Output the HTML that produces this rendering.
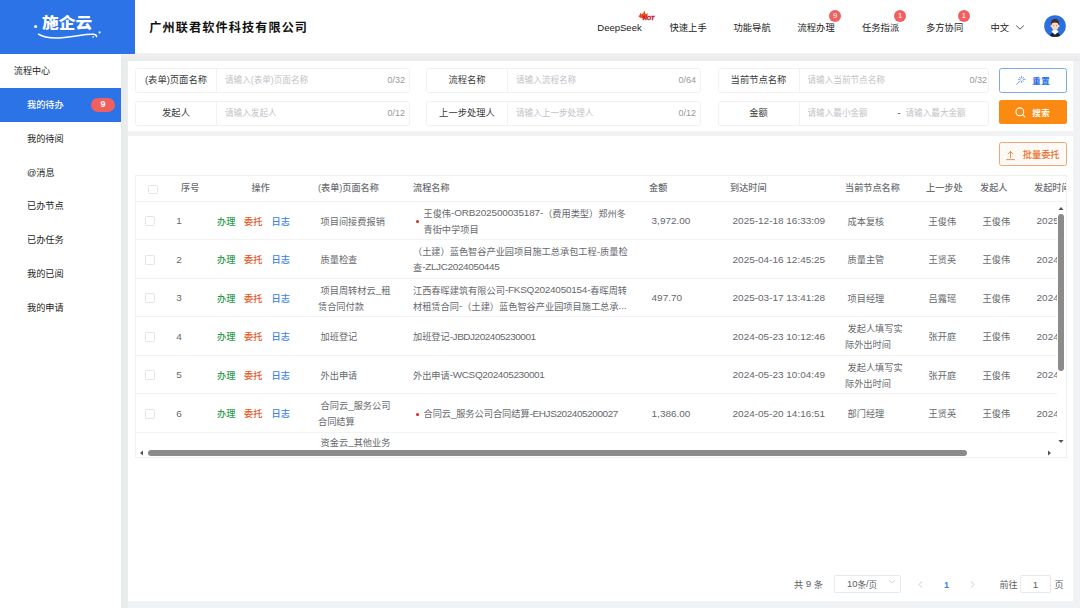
<!DOCTYPE html>
<html lang="zh-CN">
<head>
<meta charset="utf-8">
<title>施企云 - 流程中心</title>
<style>
*{box-sizing:border-box;margin:0;padding:0}
html,body{width:1080px;height:608px;overflow:hidden}
body{background:#f0f2f4;font-family:"Liberation Sans","Noto Sans CJK SC",sans-serif;color:#555;position:relative;font-size:8.6px}
.abs{position:absolute}
/* header */
#logo{left:0;top:0;width:134.8px;height:53.5px;background:#2b73e6}
#logo .t{left:42.3px;top:10.3px;font-size:16.6px;line-height:24px;font-weight:900;color:#fff;letter-spacing:0;white-space:nowrap;transform:scale(1.01,.9);transform-origin:0 100%}
#top{left:134px;top:0;width:946px;height:53.4px;background:#fff}
#topshadow{left:121px;top:53.4px;width:959px;height:7.8px;background:linear-gradient(#f1f1f2,#e9eaeb)}
#leftgap{left:121px;top:61px;width:7px;height:547px;background:linear-gradient(90deg,#e7e9ea,#ecedee)}
#company{left:149.2px;top:17.9px;font-size:12.1px;letter-spacing:1.15px;line-height:20px;font-weight:700;color:#111;white-space:nowrap}
.nav{top:20.2px;font-size:9.3px;line-height:16px;color:#222;white-space:nowrap}
.bdg{width:12.4px;height:12.4px;border-radius:50%;background:#f0605f;color:#fff;font-size:7.6px;line-height:12.4px;text-align:center}
/* sidebar */
#side{left:0;top:54px;width:121px;height:554px;background:#fff}
.mi{left:0;width:121px;height:33.7px;line-height:33.7px;padding-left:27px;font-size:9.2px;color:#222;white-space:nowrap}
.mi.act{background:#2b73e6;color:#fff;font-weight:500}
/* panels */
.panel{background:#fff}
.fl{height:25px;border:1px solid #f2f2f3;border-radius:2.5px;background:#fff}
.fl .lab{left:0;top:0;height:23px;line-height:23px;width:81px;text-align:center;font-size:9.3px;color:#3a3a3a;border-right:1px solid #f2f2f3;white-space:nowrap}
.fl .ph{top:0;height:23px;line-height:22.6px;font-size:8.6px;color:#bfc2c8;white-space:nowrap}
.fl .cnt{top:0;right:4px;height:23px;line-height:23px;font-size:9px;color:#999}
/* table */
#tbl{left:135px;top:174.5px;width:932px;height:283.5px;border:1px solid #f1f1f1;overflow:hidden;background:#fff}
.hr{left:0;top:0;width:930px;height:26px;border-bottom:1px solid #f1f1f1}
.l{font-size:108.5%;line-height:0;position:relative;top:-.6px}
.th{top:0;height:26px;line-height:25.6px;font-size:9.15px;color:#6b6d72;font-weight:500;white-space:nowrap}
.row{left:0;width:921px;border-bottom:1px solid #f3f3f3;height:38.5px}
.td{font-size:9.2px;color:#66686d;line-height:15.6px;white-space:nowrap}
.ck{width:9.6px;height:9.6px;border:1px solid #e3e4e8;border-radius:1.5px;background:#fff}
.op{font-size:9.2px;line-height:15.6px;font-weight:500;white-space:nowrap}
.dot{width:3px;height:3px;border-radius:50%;background:#d9281e}
</style>
</head>
<body>
<!-- header -->
<div id="top" class="abs"></div>
<div id="topshadow" class="abs"></div>
<div id="leftgap" class="abs"></div>
<div id="logo" class="abs">
  <div class="t abs">施企云</div>
  <svg class="abs" style="left:30px;top:20px" width="75" height="22" viewBox="0 0 75 22">
    <circle cx="5.6" cy="6.6" r="1.5" fill="#fff"/>
    <path d="M8.5 14.2 C18 20.5 38 17.6 56 14.6 C62 13.6 66.5 14.2 66.6 16.6" fill="none" stroke="#fff" stroke-width="1.5" stroke-linecap="round"/>
    <circle cx="69.6" cy="12.4" r="1.1" fill="#fff" opacity=".9"/>
    <circle cx="63.2" cy="17" r=".9" fill="#fff" opacity=".8"/>
  </svg>
</div>
<div id="company" class="abs">广州联君软件科技有限公司</div>

<div class="nav abs" style="left:597.3px;font-size:9.5px">DeepSeek</div>
<svg class="abs" style="left:636px;top:9px" width="22" height="13" viewBox="0 0 22 13">
  <path d="M2.2 7.1 C3.4 6.8 4 5.8 4.1 4.2 L4.5 4 L5.6 5.4 C6.8 4.6 7.8 3.4 8.3 1.7 C9 2.8 9.4 4 9.5 5.2 L11.2 4.5 L11.6 4.6 C11.9 5.6 11.8 6.6 11.2 7.6 L8.4 9.4 L6.3 9.3 C4.6 9 3.2 8.2 2.2 7.1 Z" fill="#f0481c"/>
  <text x="6.7" y="11.4" font-family="Liberation Sans, sans-serif" font-size="4.5" font-weight="700" font-style="italic" fill="#c5122c" stroke="#c5122c" stroke-width=".3" textLength="11.7" lengthAdjust="spacingAndGlyphs">HOT</text>
</svg>
<div class="nav abs" style="left:669.5px">快速上手</div>
<div class="nav abs" style="left:733.5px">功能导航</div>
<div class="nav abs" style="left:797.5px">流程办理</div>
<div class="nav abs" style="left:862px">任务指派</div>
<div class="nav abs" style="left:926px">多方协同</div>
<div class="nav abs" style="left:990.5px">中文</div>
<svg class="abs" style="left:1014.5px;top:24px" width="10" height="7" viewBox="0 0 10 7"><path d="M1.2 1.6 L5 5.2 L8.8 1.6" fill="none" stroke="#555" stroke-width="1"/></svg>
<div class="bdg abs" style="left:828.8px;top:10px">9</div>
<div class="bdg abs" style="left:893.8px;top:10px">1</div>
<div class="bdg abs" style="left:957.6px;top:10px">1</div>
<svg class="abs" style="left:1043.9px;top:14.5px" width="22" height="22" viewBox="0 0 23 23">
  <defs><clipPath id="av"><circle cx="11.5" cy="11.5" r="11.3"/></clipPath></defs>
  <circle cx="11.5" cy="11.5" r="11.3" fill="#2a6fe0"/>
  <g clip-path="url(#av)">
    <path d="M6.2 23 C6.2 19.6 8.4 18 11.5 18 C14.6 18 16.8 19.6 16.8 23 Z" fill="#1b1f2a"/>
    <path d="M7.8 17.4 L11.5 20.6 L15.2 17.4 L13.4 15.4 L9.6 15.4 Z" fill="#fff"/>
    <ellipse cx="11.5" cy="11.2" rx="3.8" ry="4.9" fill="#f7d8c4"/>
    <ellipse cx="7.6" cy="11.6" rx=".8" ry="1.2" fill="#f7d8c4"/><ellipse cx="15.4" cy="11.6" rx=".8" ry="1.2" fill="#f7d8c4"/>
    <path d="M7.4 10.6 C6.8 5.8 9 4.2 11.5 4.2 C14 4.2 16.2 5.8 15.6 10.6 C15 8.6 14 7.8 11.5 7.8 C9 7.8 8 8.6 7.4 10.6 Z" fill="#4a2a1e"/>
    <circle cx="10" cy="11" r=".45" fill="#444"/><circle cx="13" cy="11" r=".45" fill="#444"/>
  </g>
</svg>

<!-- sidebar -->
<div id="side" class="abs">
  <div class="abs" style="left:13.8px;top:9px;font-size:9.1px;line-height:16px;color:#222;white-space:nowrap">流程中心</div>
  <div class="mi act abs" style="top:34.3px;height:33.6px;line-height:35.1px">我的待办</div>
  <div class="abs" style="left:91px;top:44.4px;width:24px;height:13.4px;border-radius:7px;background:#f0605f;color:#fff;font-size:9px;font-weight:700;line-height:13.6px;text-align:center">9</div>
  <div class="mi abs" style="top:68.75px">我的待阅</div>
  <div class="mi abs" style="top:102.50px">@消息</div>
  <div class="mi abs" style="top:136.25px">已办节点</div>
  <div class="mi abs" style="top:170.00px">已办任务</div>
  <div class="mi abs" style="top:203.75px">我的已阅</div>
  <div class="mi abs" style="top:237.50px">我的申请</div>
</div>

<!-- filter panel -->
<div class="panel abs" style="left:128px;top:61px;width:945px;height:70px"></div>
<div class="fl abs" style="left:135px;top:68px;width:275px"><div class="lab abs">(表单)页面名称</div><div class="ph abs" style="left:89px">请输入(表单)页面名称</div><div class="cnt abs">0/32</div></div>
<div class="fl abs" style="left:426px;top:68px;width:275px"><div class="lab abs">流程名称</div><div class="ph abs" style="left:89px">请输入流程名称</div><div class="cnt abs">0/64</div></div>
<div class="fl abs" style="left:717.5px;top:68px;width:271px"><div class="lab abs">当前节点名称</div><div class="ph abs" style="left:89px">请输入当前节点名称</div><div class="cnt abs" style="right:.5px">0/32</div></div>
<div class="fl abs" style="left:135px;top:100.5px;width:275px"><div class="lab abs">发起人</div><div class="ph abs" style="left:89px">请输入发起人</div><div class="cnt abs">0/12</div></div>
<div class="fl abs" style="left:426px;top:100.5px;width:275px"><div class="lab abs">上一步处理人</div><div class="ph abs" style="left:89px">请输入上一步处理人</div><div class="cnt abs">0/12</div></div>
<div class="fl abs" style="left:717.5px;top:100.5px;width:271px"><div class="lab abs">金额</div><div class="ph abs" style="left:89px">请输入最小金额</div><div class="abs" style="left:179px;top:0;line-height:22px;font-size:9px;color:#333">-</div><div class="ph abs" style="left:187px">请输入最大金额</div></div>

<!-- buttons -->
<div class="abs" style="left:999px;top:68px;width:68px;height:25px;border:1px solid #7aa9ec;border-radius:2.5px;background:#fff"></div>
<svg class="abs" style="left:1014.6px;top:74.2px" width="12" height="12" viewBox="0 0 12 12" fill="none" stroke="#4f86e6" stroke-width=".8" stroke-linecap="round">
  <path d="M1.6 10.4 L5.2 6.8"/><path d="M6.6 2.2v1.6M6.6 7.4v1.2M3.6 5.4h1.4M8.4 5.4h1.6M4.6 3.4l.9.9M8.6 3.4l-.9.9M8.6 7.4l-.9-.9"/>
</svg>
<div class="abs" style="left:1032.3px;top:72.9px;font-size:8.5px;letter-spacing:.35px;line-height:16px;font-weight:700;color:#2b73e6;white-space:nowrap">重置</div>
<div class="abs" style="left:999px;top:100px;width:67.5px;height:24px;border-radius:2.5px;background:#fb8a12"></div>
<svg class="abs" style="left:1014px;top:105.5px" width="13" height="13" viewBox="0 0 13 13" fill="none" stroke="#fff" stroke-width="1.1" stroke-linecap="round"><circle cx="5.8" cy="5.8" r="3.9"/><path d="M8.8 8.8 L10.8 10.8"/></svg>
<div class="abs" style="left:1032.3px;top:105px;font-size:8.5px;letter-spacing:.35px;line-height:16px;font-weight:700;color:#fff;white-space:nowrap">搜索</div>

<!-- table panel -->
<div class="panel abs" style="left:128px;top:135.5px;width:945px;height:465px"></div>
<div class="abs" style="left:999px;top:142.2px;width:67.5px;height:24px;border:1px solid #f0a878;border-radius:2.5px;background:#fffaf6"></div>
<svg class="abs" style="left:1005.3px;top:149.6px" width="11" height="11" viewBox="0 0 11 11" fill="none" stroke="#e8702a" stroke-width=".8" stroke-linecap="round" stroke-linejoin="round"><path d="M5.5 7.6V1.6M3.2 3.8L5.5 1.5L7.8 3.8M1.6 9.6h7.8"/></svg>
<div class="abs" style="left:1022.8px;top:147.2px;font-size:9.2px;line-height:16px;font-weight:500;color:#e8702a;white-space:nowrap">批量委托</div>

<div id="tbl" class="abs">
  <div class="hr abs">
    <div class="ck abs" style="left:12px;top:9px"></div>
    <div class="th abs" style="left:45px">序号</div>
    <div class="th abs" style="left:115.5px">操作</div>
    <div class="th abs" style="left:182px">(表单)页面名称</div>
    <div class="th abs" style="left:277px">流程名称</div>
    <div class="th abs" style="left:513px">金额</div>
    <div class="th abs" style="left:594px">到达时间</div>
    <div class="th abs" style="left:709px">当前节点名称</div>
    <div class="th abs" style="left:790px">上一步处</div>
    <div class="th abs" style="left:844px">发起人</div>
    <div class="th abs" style="left:898px">发起时间</div>
  </div>
  <div id="rows">
    <div class="row abs" style="top:26.40px"></div>
    <div class="ck abs" style="left:9px;top:40.95px"></div>
    <div class="td abs" style="left:40.3px;top:39.25px"><span class="l">1</span></div>
    <div class="op abs" style="left:81px;top:39.25px;color:#2f9b4e">办理</div>
    <div class="op abs" style="left:108px;top:39.25px;color:#e8561f">委托</div>
    <div class="op abs" style="left:135.5px;top:39.25px;color:#3a84e0">日志</div>
    <div class="td abs" style="left:182px;top:39.25px">&nbsp;项目间接费报销</div>
    <div class="dot abs" style="left:280px;top:44.55px"></div>
    <div class="td abs" style="left:287.5px;top:31.45px">王俊伟<span class="l" style="letter-spacing:-0.16px">-ORB202500035187-</span>（费用类型）郑州冬<br>青街中学项目</div>
    <div class="td abs" style="left:513px;top:39.25px">&nbsp;<span class="l">3,972.00</span></div>
    <div class="td abs" style="left:594px;top:39.25px">&nbsp;<span class="l">2025-12-18 16:33:09</span></div>
    <div class="td abs" style="left:709px;top:39.25px">&nbsp;成本复核</div>
    <div class="td abs" style="left:790px;top:39.25px">&nbsp;王俊伟</div>
    <div class="td abs" style="left:844px;top:39.25px">&nbsp;王俊伟</div>
    <div class="td abs" style="left:898px;top:39.25px">&nbsp;<span class="l">2025</span></div>
    <div class="row abs" style="top:64.90px"></div>
    <div class="ck abs" style="left:9px;top:79.45px"></div>
    <div class="td abs" style="left:40.3px;top:77.75px"><span class="l">2</span></div>
    <div class="op abs" style="left:81px;top:77.75px;color:#2f9b4e">办理</div>
    <div class="op abs" style="left:108px;top:77.75px;color:#e8561f">委托</div>
    <div class="op abs" style="left:135.5px;top:77.75px;color:#3a84e0">日志</div>
    <div class="td abs" style="left:182px;top:77.75px">&nbsp;质量检查</div>
    <div class="td abs" style="left:277px;top:69.95px">（土建）蓝色智谷产业园项目施工总承包工程<span class="l">-</span>质量检<br>查<span class="l" style="letter-spacing:-0.36px">-ZLJC2024050445</span></div>
    <div class="td abs" style="left:594px;top:77.75px">&nbsp;<span class="l">2025-04-16 12:45:25</span></div>
    <div class="td abs" style="left:709px;top:77.75px">&nbsp;质量主管</div>
    <div class="td abs" style="left:790px;top:77.75px">&nbsp;王贤英</div>
    <div class="td abs" style="left:844px;top:77.75px">&nbsp;王俊伟</div>
    <div class="td abs" style="left:898px;top:77.75px">&nbsp;<span class="l">2024</span></div>
    <div class="row abs" style="top:103.40px"></div>
    <div class="ck abs" style="left:9px;top:117.95px"></div>
    <div class="td abs" style="left:40.3px;top:116.25px"><span class="l">3</span></div>
    <div class="op abs" style="left:81px;top:116.25px;color:#2f9b4e">办理</div>
    <div class="op abs" style="left:108px;top:116.25px;color:#e8561f">委托</div>
    <div class="op abs" style="left:135.5px;top:116.25px;color:#3a84e0">日志</div>
    <div class="td abs" style="left:182px;top:108.45px">&nbsp;项目周转材云<span class="l">_</span>租<br>赁合同付款</div>
    <div class="td abs" style="left:277px;top:108.45px">江西春晖建筑有限公司<span class="l" style="letter-spacing:-0.24px">-FKSQ2024050154-</span>春晖周转<br>材租赁合同<span class="l">-</span>（土建）蓝色智谷产业园项目施工总承<span class="l">...</span></div>
    <div class="td abs" style="left:513px;top:116.25px">&nbsp;<span class="l">497.70</span></div>
    <div class="td abs" style="left:594px;top:116.25px">&nbsp;<span class="l">2025-03-17 13:41:28</span></div>
    <div class="td abs" style="left:709px;top:116.25px">&nbsp;项目经理</div>
    <div class="td abs" style="left:790px;top:116.25px">&nbsp;吕露瑶</div>
    <div class="td abs" style="left:844px;top:116.25px">&nbsp;王俊伟</div>
    <div class="td abs" style="left:898px;top:116.25px">&nbsp;<span class="l">2024</span></div>
    <div class="row abs" style="top:141.90px"></div>
    <div class="ck abs" style="left:9px;top:156.45px"></div>
    <div class="td abs" style="left:40.3px;top:154.75px"><span class="l">4</span></div>
    <div class="op abs" style="left:81px;top:154.75px;color:#2f9b4e">办理</div>
    <div class="op abs" style="left:108px;top:154.75px;color:#e8561f">委托</div>
    <div class="op abs" style="left:135.5px;top:154.75px;color:#3a84e0">日志</div>
    <div class="td abs" style="left:182px;top:154.75px">&nbsp;加班登记</div>
    <div class="td abs" style="left:277px;top:154.75px">加班登记<span class="l" style="letter-spacing:-0.46px">-JBDJ202405230001</span></div>
    <div class="td abs" style="left:594px;top:154.75px">&nbsp;<span class="l">2024-05-23 10:12:46</span></div>
    <div class="td abs" style="left:709px;top:146.95px">&nbsp;发起人填写实<br>际外出时间</div>
    <div class="td abs" style="left:790px;top:154.75px">&nbsp;张开庭</div>
    <div class="td abs" style="left:844px;top:154.75px">&nbsp;王俊伟</div>
    <div class="td abs" style="left:898px;top:154.75px">&nbsp;<span class="l">2024</span></div>
    <div class="row abs" style="top:180.40px"></div>
    <div class="ck abs" style="left:9px;top:194.95px"></div>
    <div class="td abs" style="left:40.3px;top:193.25px"><span class="l">5</span></div>
    <div class="op abs" style="left:81px;top:193.25px;color:#2f9b4e">办理</div>
    <div class="op abs" style="left:108px;top:193.25px;color:#e8561f">委托</div>
    <div class="op abs" style="left:135.5px;top:193.25px;color:#3a84e0">日志</div>
    <div class="td abs" style="left:182px;top:193.25px">&nbsp;外出申请</div>
    <div class="td abs" style="left:277px;top:193.25px">外出申请<span class="l" style="letter-spacing:-0.36px">-WCSQ202405230001</span></div>
    <div class="td abs" style="left:594px;top:193.25px">&nbsp;<span class="l">2024-05-23 10:04:49</span></div>
    <div class="td abs" style="left:709px;top:185.45px">&nbsp;发起人填写实<br>际外出时间</div>
    <div class="td abs" style="left:790px;top:193.25px">&nbsp;张开庭</div>
    <div class="td abs" style="left:844px;top:193.25px">&nbsp;王俊伟</div>
    <div class="td abs" style="left:898px;top:193.25px">&nbsp;<span class="l">2024</span></div>
    <div class="row abs" style="top:218.90px"></div>
    <div class="ck abs" style="left:9px;top:233.45px"></div>
    <div class="td abs" style="left:40.3px;top:231.75px"><span class="l">6</span></div>
    <div class="op abs" style="left:81px;top:231.75px;color:#2f9b4e">办理</div>
    <div class="op abs" style="left:108px;top:231.75px;color:#e8561f">委托</div>
    <div class="op abs" style="left:135.5px;top:231.75px;color:#3a84e0">日志</div>
    <div class="td abs" style="left:182px;top:223.95px">&nbsp;合同云<span class="l">_</span>服务公司<br>合同结算</div>
    <div class="dot abs" style="left:280px;top:237.05px"></div>
    <div class="td abs" style="left:287.5px;top:231.75px">合同云<span class="l" style="letter-spacing:-0.42px">_</span>服务公司合同结算<span class="l" style="letter-spacing:-0.42px">-EHJS202405200027</span></div>
    <div class="td abs" style="left:513px;top:231.75px">&nbsp;<span class="l">1,386.00</span></div>
    <div class="td abs" style="left:594px;top:231.75px">&nbsp;<span class="l">2024-05-20 14:16:51</span></div>
    <div class="td abs" style="left:709px;top:231.75px">&nbsp;部门经理</div>
    <div class="td abs" style="left:790px;top:231.75px">&nbsp;王贤英</div>
    <div class="td abs" style="left:844px;top:231.75px">&nbsp;王俊伟</div>
    <div class="td abs" style="left:898px;top:231.75px">&nbsp;<span class="l">2024</span></div>
    <div class="td abs" style="left:182px;top:260.40px">&nbsp;资金云<span class="l">_</span>其他业务</div>
    <!-- scrollbars -->
    <div class="abs" style="left:921px;top:27px;width:9px;height:247px;background:#fff"></div>
    <div class="abs" style="left:922.3px;top:38.5px;width:5.6px;height:156.5px;border-radius:3px;background:#8b8b8b"></div>
    <svg class="abs" style="left:922px;top:30.5px" width="6" height="5" viewBox="0 0 6 5"><path d="M.4 4L3 1L5.6 4Z" fill="#555"/></svg>
    <svg class="abs" style="left:922px;top:263.5px" width="6" height="5" viewBox="0 0 6 5"><path d="M.4 1L3 4L5.6 1Z" fill="#555"/></svg>
    <div class="abs" style="left:0;top:272.5px;width:930px;height:10px;background:#fff"></div>
    <div class="abs" style="left:12px;top:274.7px;width:819px;height:5.6px;border-radius:3px;background:#8b8b8b"></div>
    <svg class="abs" style="left:3px;top:274.5px" width="5" height="6" viewBox="0 0 5 6"><path d="M4 .4L1 3L4 5.6Z" fill="#555"/></svg>
    <svg class="abs" style="left:911px;top:274.5px" width="5" height="6" viewBox="0 0 5 6"><path d="M1 .4L4 3L1 5.6Z" fill="#555"/></svg>
  </div>
</div>

<!-- pagination -->
<div class="abs" style="left:794px;top:576.5px;font-size:9.1px;line-height:16px;color:#5c5e63;white-space:nowrap">共 <span class="l">9</span> 条</div>
<div class="abs" style="left:833.5px;top:575px;width:67px;height:18px;border:1px solid #e8e9ec;border-radius:2px;background:#fff"></div>
<div class="abs" style="left:847px;top:576.5px;font-size:8.6px;line-height:16px;color:#5c5e63;white-space:nowrap"><span class="l">10</span>条<span class="l">/</span>页</div>
<svg class="abs" style="left:888px;top:579px" width="8" height="6" viewBox="0 0 8 6"><path d="M1.2 1.4L4 4.2L6.8 1.4" fill="none" stroke="#c4c7cd" stroke-width=".8"/></svg>
<svg class="abs" style="left:917px;top:579.5px" width="7" height="9" viewBox="0 0 7 9"><path d="M5 1.2L2 4.5L5 7.8" fill="none" stroke="#c4c7cd" stroke-width=".9"/></svg>
<div class="abs" style="left:944px;top:576.5px;font-size:9px;line-height:16px;font-weight:700;color:#3a84e0">1</div>
<svg class="abs" style="left:969px;top:579.5px" width="7" height="9" viewBox="0 0 7 9"><path d="M2 1.2L5 4.5L2 7.8" fill="none" stroke="#c4c7cd" stroke-width=".9"/></svg>
<div class="abs" style="left:999.5px;top:576.5px;font-size:9.1px;line-height:16px;color:#5c5e63;white-space:nowrap">前往</div>
<div class="abs" style="left:1020px;top:575px;width:31px;height:18px;border:1px solid #e8e9ec;border-radius:2px;background:#fff;text-align:center;font-size:9.8px;line-height:17px;color:#5c5e63">1</div>
<div class="abs" style="left:1054.5px;top:576.5px;font-size:9.1px;line-height:16px;color:#5c5e63">页</div>
</body>
</html>
